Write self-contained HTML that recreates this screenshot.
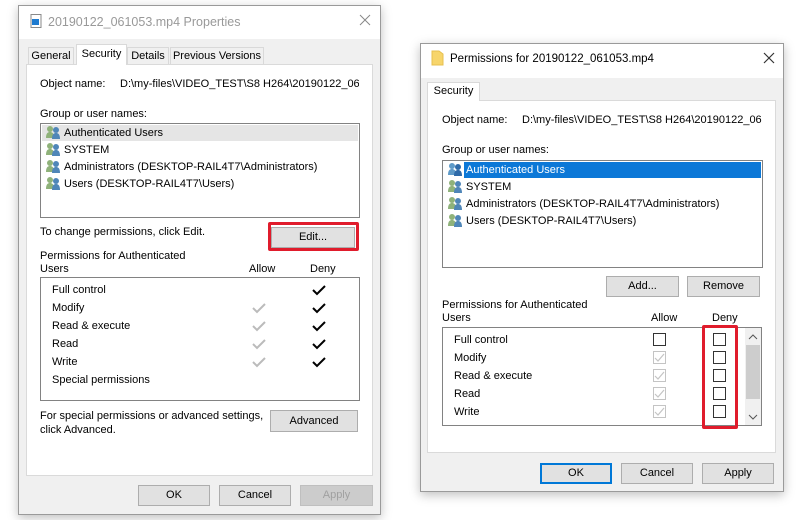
<!DOCTYPE html>
<html><head><meta charset="utf-8"><style>
*{box-sizing:border-box;margin:0;padding:0}
body{width:800px;height:520px;background:#fff;position:relative;overflow:hidden;font-family:"Liberation Sans",sans-serif;font-size:11px;color:#000}
.a{position:absolute;white-space:nowrap}
.win{position:absolute;background:#f0f0f0;border:1px solid #9a9a9a;box-shadow:0 3px 10px rgba(0,0,0,.25)}
.tb{position:absolute;left:0;right:0;top:0;background:#fff}
.panel{position:absolute;background:#fff;border:1px solid #dadada}
.box{position:absolute;background:#fff;border:1px solid #828282}
.btn{position:absolute;background:#e1e1e1;border:1px solid #adadad;text-align:center;font-size:11px;white-space:nowrap}
.red{position:absolute;border:3px solid #e01c2c;border-radius:2px}
.cb{position:absolute;width:13px;height:13px;border:1px solid #333;background:#fff}
.tab{position:absolute;background:#f0f0f0;border:1px solid #d9d9d9;border-bottom:none;text-align:center;font-size:11px;white-space:nowrap}
</style></head><body>

<!-- LEFT WINDOW -->
<div class="win" style="left:18px;top:5px;width:363px;height:510px">
 <div class="tb" style="height:33px"></div>
</div>
<svg class="a" style="left:30px;top:14px" width="12" height="14"><rect x="1" y="0.5" width="10" height="13" fill="#fff" stroke="#8a8a8a"/><rect x="2" y="5" width="7" height="6" fill="#1e7bd0"/></svg>
<div class="a" style="left:48px;top:15px;font-size:12.5px;color:#999">20190122_061053.mp4 Properties</div>
<svg class="a" style="left:359px;top:14px" width="12" height="12"><path d="M1 1l10 10M11 1L1 11" stroke="#888" stroke-width="1"/></svg>

<div class="tab" style="left:28px;top:47px;width:46px;height:18px;line-height:17px">General</div>
<div class="tab" style="left:76px;top:44px;width:51px;height:21px;line-height:19px;background:#fff">Security</div>
<div class="tab" style="left:127px;top:47px;width:42px;height:18px;line-height:17px">Details</div>
<div class="tab" style="left:170px;top:47px;width:94px;height:18px;line-height:17px">Previous Versions</div>
<div class="panel" style="left:26px;top:64px;width:347px;height:412px"></div>
<div class="panel" style="left:77px;top:63px;width:49px;height:3px;border:none"></div>

<div class="a" style="left:40px;top:78px">Object name:</div>
<div class="a" style="left:120px;top:78px;width:239px;overflow:hidden">D:\my-files\VIDEO_TEST\S8 H264\20190122_061053.mp4</div>
<div class="a" style="left:40px;top:108px">Group or user names:</div>
<div class="box" style="left:40px;top:123px;width:320px;height:95px"></div>
<div class="a" style="left:42px;top:125px;width:316px;height:16px;background:#e5e5e5"></div>
<div class="a" style="left:64px;top:127px">Authenticated Users</div>
<div class="a" style="left:64px;top:144px">SYSTEM</div>
<div class="a" style="left:64px;top:161px">Administrators (DESKTOP-RAIL4T7\Administrators)</div>
<div class="a" style="left:64px;top:178px">Users (DESKTOP-RAIL4T7\Users)</div>

<div class="a" style="left:40px;top:226px">To change permissions, click Edit.</div>
<div class="btn" style="left:271px;top:227px;width:84px;height:21px;line-height:19px">Edit...</div>
<div class="red" style="left:268px;top:222px;width:91px;height:29px"></div>

<div class="a" style="left:40px;top:250px">Permissions for Authenticated</div>
<div class="a" style="left:40px;top:263px">Users</div>
<div class="a" style="left:249px;top:263px">Allow</div>
<div class="a" style="left:310px;top:263px">Deny</div>
<div class="box" style="left:40px;top:277px;width:320px;height:124px"></div>
<div class="a" style="left:52px;top:284px">Full control</div>
<div class="a" style="left:52px;top:302px">Modify</div>
<div class="a" style="left:52px;top:320px">Read &amp; execute</div>
<div class="a" style="left:52px;top:338px">Read</div>
<div class="a" style="left:52px;top:356px">Write</div>
<div class="a" style="left:52px;top:374px">Special permissions</div>

<div class="a" style="left:40px;top:410px">For special permissions or advanced settings,</div>
<div class="a" style="left:40px;top:424px">click Advanced.</div>
<div class="btn" style="left:270px;top:410px;width:88px;height:22px;line-height:20px">Advanced</div>

<div class="btn" style="left:138px;top:485px;width:72px;height:21px;line-height:19px">OK</div>
<div class="btn" style="left:219px;top:485px;width:72px;height:21px;line-height:19px">Cancel</div>
<div class="btn" style="left:300px;top:485px;width:73px;height:21px;line-height:19px;background:#ccc;border-color:#bfbfbf;color:#a0a0a0">Apply</div>

<!-- RIGHT WINDOW -->
<div class="win" style="left:420px;top:43px;width:364px;height:449px">
 <div class="tb" style="height:34px"></div>
</div>
<svg class="a" style="left:431px;top:50px" width="13" height="16"><path d="M1 1h7l4 3v11H1z" fill="#f7d56b" stroke="#e7c04f"/></svg>
<div class="a" style="left:450px;top:53px;font-size:11.5px">Permissions for 20190122_061053.mp4</div>
<svg class="a" style="left:763px;top:52px" width="12" height="12"><path d="M1 1l10 10M11 1L1 11" stroke="#333" stroke-width="1.2"/></svg>

<div class="panel" style="left:427px;top:100px;width:349px;height:353px"></div>
<div class="tab" style="left:427px;top:82px;width:53px;height:19px;line-height:17px;background:#fff">Security</div>

<div class="a" style="left:442px;top:114px">Object name:</div>
<div class="a" style="left:522px;top:114px;width:240px;overflow:hidden">D:\my-files\VIDEO_TEST\S8 H264\20190122_061053.mp4</div>
<div class="a" style="left:442px;top:144px">Group or user names:</div>
<div class="box" style="left:442px;top:160px;width:321px;height:108px"></div>
<div class="a" style="left:464px;top:162px;width:297px;height:16px;background:#0c78d7"></div>
<div class="a" style="left:466px;top:164px;color:#fff">Authenticated Users</div>
<div class="a" style="left:466px;top:181px">SYSTEM</div>
<div class="a" style="left:466px;top:198px">Administrators (DESKTOP-RAIL4T7\Administrators)</div>
<div class="a" style="left:466px;top:215px">Users (DESKTOP-RAIL4T7\Users)</div>

<div class="btn" style="left:606px;top:276px;width:73px;height:21px;line-height:19px">Add...</div>
<div class="btn" style="left:687px;top:276px;width:73px;height:21px;line-height:19px">Remove</div>

<div class="a" style="left:442px;top:299px">Permissions for Authenticated</div>
<div class="a" style="left:442px;top:312px">Users</div>
<div class="a" style="left:651px;top:312px">Allow</div>
<div class="a" style="left:712px;top:312px">Deny</div>
<div class="box" style="left:442px;top:327px;width:320px;height:99px"></div>
<div class="a" style="left:745px;top:328px;width:16px;height:97px;background:#f0f0f0"></div>
<div class="a" style="left:746px;top:345px;width:14px;height:54px;background:#cdcdcd"></div>
<svg class="a" style="left:748px;top:334px" width="10" height="90"><path d="M1 5l4-4 4 4M1 81l4 4 4-4" fill="none" stroke="#555"/></svg>
<div class="a" style="left:454px;top:334px">Full control</div>
<div class="a" style="left:454px;top:352px">Modify</div>
<div class="a" style="left:454px;top:370px">Read &amp; execute</div>
<div class="a" style="left:454px;top:388px">Read</div>
<div class="a" style="left:454px;top:406px">Write</div>
<div class="cb" style="left:653px;top:333px"></div>
<div class="red" style="left:702px;top:325px;width:36px;height:104px"></div>
<div class="cb" style="left:713px;top:333px"></div>
<div class="cb" style="left:713px;top:351px"></div>
<div class="cb" style="left:713px;top:369px"></div>
<div class="cb" style="left:713px;top:387px"></div>
<div class="cb" style="left:713px;top:405px"></div>

<div class="btn" style="left:540px;top:463px;width:72px;height:21px;line-height:17px;border:2px solid #0078d7">OK</div>
<div class="btn" style="left:621px;top:463px;width:72px;height:21px;line-height:19px">Cancel</div>
<div class="btn" style="left:702px;top:463px;width:72px;height:21px;line-height:19px">Apply</div>

<svg class="a" style="left:0;top:0" width="800" height="520">
 <defs>
  <g id="u"><circle cx="4" cy="4" r="3" fill="#8fb27a"/><path d="M0 13c0-5 2-6 4-6s4 1 4 6z" fill="#8fb27a"/><circle cx="10" cy="5" r="3" fill="#4f86b8"/><path d="M6 14c0-5 2-6 4-6s4 1 4 6z" fill="#4f86b8"/></g>
  <g id="ub"><circle cx="4" cy="4" r="3" fill="#5e9ac8"/><path d="M0 13c0-5 2-6 4-6s4 1 4 6z" fill="#5e9ac8"/><circle cx="10" cy="5" r="3" fill="#2e6aa8"/><path d="M6 14c0-5 2-6 4-6s4 1 4 6z" fill="#2e6aa8"/></g>
  <path id="ck" d="M0 5l4 4 8-8" fill="none" stroke-width="2"/>
  <path id="ckl" d="M2 6l3 3 6-7" fill="none" stroke-width="1.2"/>
 </defs>
 <use href="#u" x="46" y="125"/><use href="#u" x="46" y="142"/><use href="#u" x="46" y="159"/><use href="#u" x="46" y="176"/>
 <use href="#ub" x="448" y="162"/><use href="#u" x="448" y="179"/><use href="#u" x="448" y="196"/><use href="#u" x="448" y="213"/>
 <g stroke="#000"><use href="#ck" x="313" y="285"/><use href="#ck" x="313" y="303"/><use href="#ck" x="313" y="321"/><use href="#ck" x="313" y="339"/><use href="#ck" x="313" y="357"/></g>
 <g stroke="#bbb"><use href="#ck" x="253" y="303"/><use href="#ck" x="253" y="321"/><use href="#ck" x="253" y="339"/><use href="#ck" x="253" y="357"/></g>
 <g stroke="#c4c4c4"><rect x="653.5" y="351.5" width="12" height="12" fill="none"/><rect x="653.5" y="369.5" width="12" height="12" fill="none"/><rect x="653.5" y="387.5" width="12" height="12" fill="none"/><rect x="653.5" y="405.5" width="12" height="12" fill="none"/>
 <use href="#ckl" x="653" y="352"/><use href="#ckl" x="653" y="370"/><use href="#ckl" x="653" y="388"/><use href="#ckl" x="653" y="406"/></g>
</svg>
</body></html>
